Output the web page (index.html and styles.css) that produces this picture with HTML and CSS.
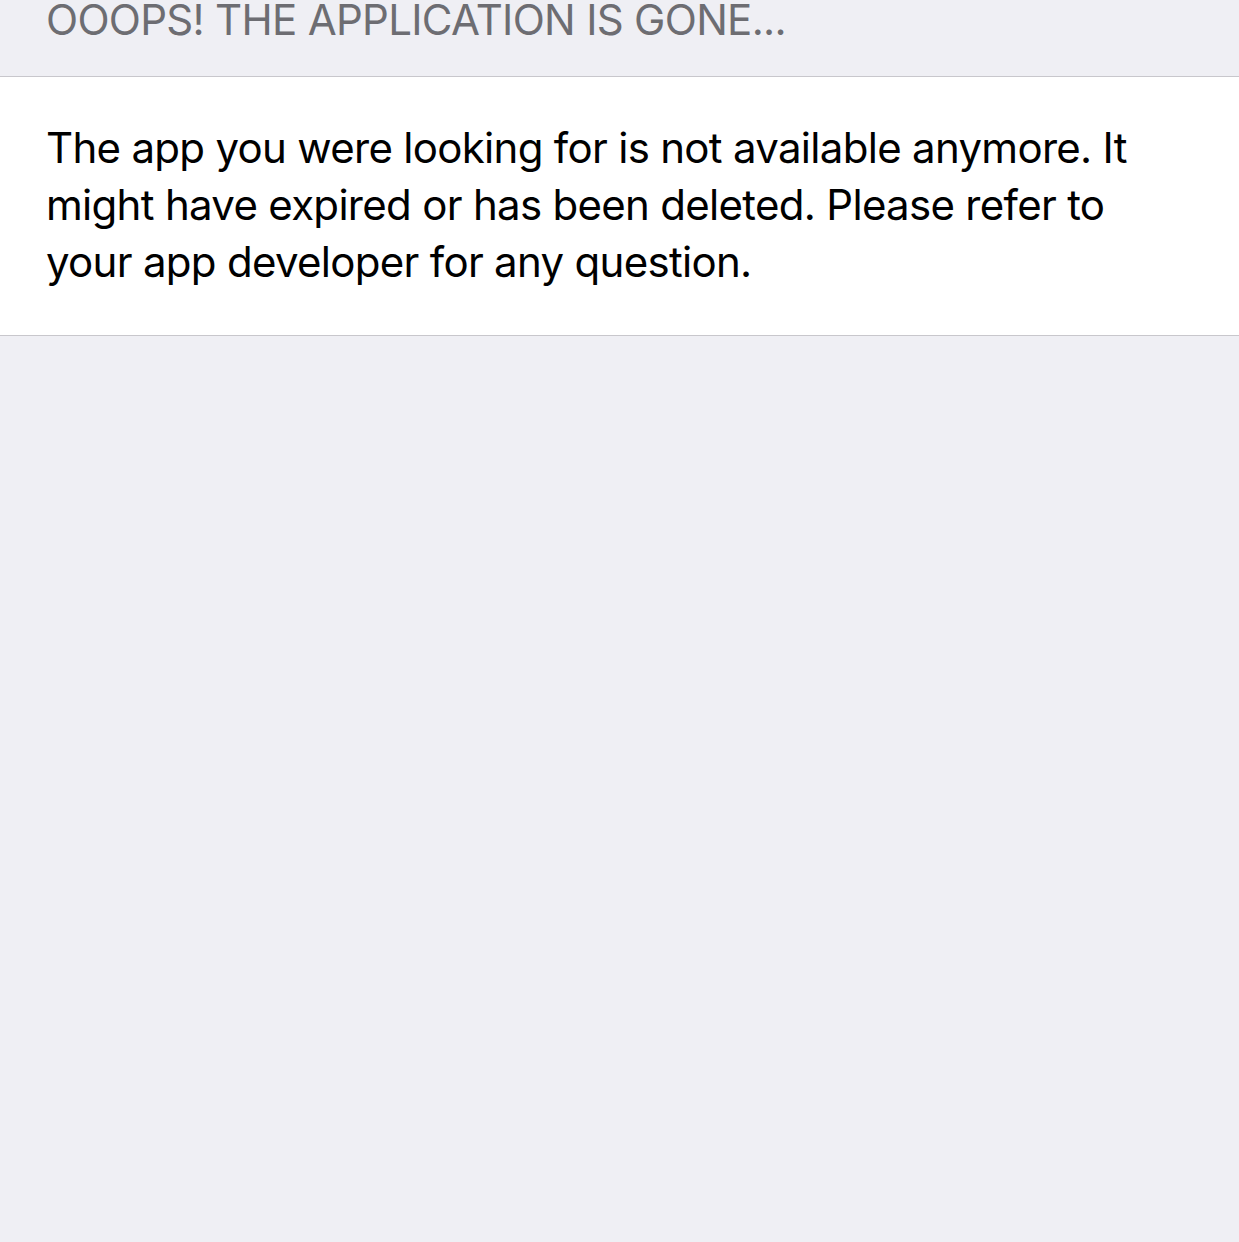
FILE: index.html
```html
<!DOCTYPE html>
<html lang="en">
<head>
<meta charset="utf-8">
<title>Application gone</title>
<link rel="stylesheet" href="styles.css">
</head>
<body>
<header class="section-header">
  <h1 class="section-title">OOOPS! THE APPLICATION IS GONE...</h1>
</header>
<main class="section-body">
  <p class="message">The app you were looking for is not available anymore. It might have expired or has been deleted. Please refer to your app developer for any question.</p>
</main>
</body>
</html>
```

FILE: styles.css
```css
html, body {
  margin: 0;
  padding: 0;
  background: #efeff4;
  height: 100%;
}
body {
  font-family: Inter, "Noto Sans", sans-serif;
  overflow: hidden;
}
.section-header {
  height: 77px;
  box-sizing: border-box;
  padding: 0 46px;
  border-bottom: 1px solid #c8c7cc;
  overflow: hidden;
}
.section-title {
  margin: -1px 0 0;
  font-size: 42px;
  line-height: 42px;
  font-weight: 400;
  letter-spacing: -0.7px;
  color: #6d6d72;
  white-space: nowrap;
}
.section-body {
  background: #ffffff;
  border-bottom: 1px solid #c8c7cc;
  padding: 42px 46px 45px;
}
.message {
  margin: 0;
  font-size: 42px;
  line-height: 57px;
  letter-spacing: -0.7px;
  color: #000000;
  max-width: 1120px;
}
```
